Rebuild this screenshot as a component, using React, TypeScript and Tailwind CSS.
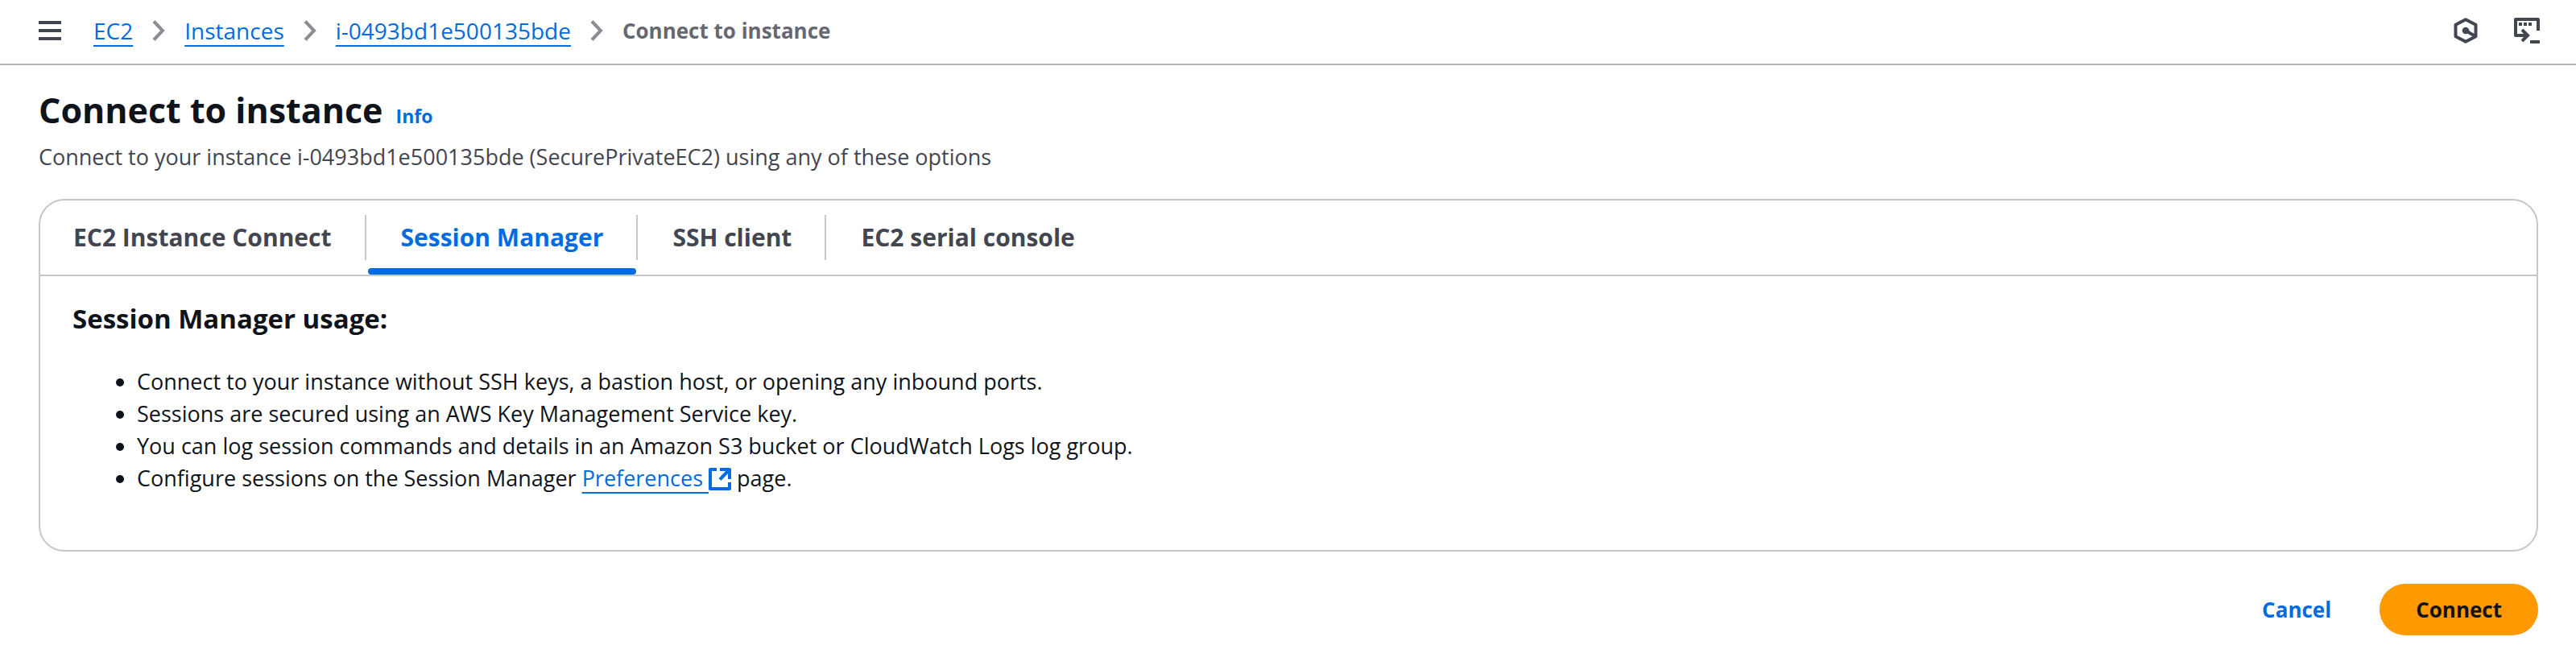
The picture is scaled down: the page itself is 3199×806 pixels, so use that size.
import { Fragment, useState } from "react";

const crumbs = ["EC2", "Instances", "i-0493bd1e500135bde"];
const tabs = ["EC2 Instance Connect", "Session Manager", "SSH client", "EC2 serial console"];
const linkText =
  "text-[#006ce0] underline decoration-2 underline-offset-[7px] [text-decoration-skip-ink:none]";

function MenuIcon() {
  return (
    <svg className="h-6 w-7" viewBox="0 0 28 24" fill="currentColor" aria-hidden="true">
      <path d="M0 0h28v4H0zM0 10h28v4H0zM0 20h28v4H0z" />
    </svg>
  );
}

function ChevronIcon() {
  return (
    <svg className="h-[26px] w-4 text-[#8c8c94]" viewBox="0 0 16 26" fill="none" stroke="currentColor" strokeWidth="4" aria-hidden="true">
      <path d="M2 1.5 13 13 2 24.5" />
    </svg>
  );
}

function HexagonIcon() {
  return (
    <svg className="size-8" viewBox="0 0 32 32" fill="none" stroke="currentColor" strokeWidth="4" strokeLinejoin="round" aria-hidden="true">
      <path d="M16 2.2 28.5 8.8v14.4L16 29.8 3.5 23.2V8.8z" />
      <path d="m16 16 11 6.5" />
      <circle cx="16" cy="16" r="4.3" fill="currentColor" stroke="none" />
    </svg>
  );
}

function TerminalIcon() {
  return (
    <svg className="size-8" viewBox="0 0 32 32" fill="none" stroke="currentColor" strokeWidth="4" aria-hidden="true">
      <path strokeLinejoin="round" d="M30 16V2H2v20h16" />
      <path d="m10 15 7 7-7 7" />
      <path d="M20 30h12" />
      <path fill="currentColor" stroke="none" d="M6 6h4v4H6zM12 6h4v4h-4zM18 6h4v4h-4z" />
    </svg>
  );
}

function ExternalIcon() {
  return (
    <svg className="inline-block size-7 align-[-5px]" viewBox="0 0 28 28" fill="none" stroke="currentColor" strokeWidth="4" strokeLinejoin="round" aria-hidden="true">
      <path d="M10 2H2v24h24v-8" />
      <path d="M14 2h12v12" />
      <path d="M25 3 14 14.5" />
    </svg>
  );
}

export default function App() {
  const [active, setActive] = useState("Session Manager");

  return (
    <div className="bg-white font-['Open_Sans',sans-serif] text-[27px] leading-10 text-[#0f141a]">
      <header className="flex h-[81px] items-center justify-between border-b-2 border-[#b4b4bb] pr-[45px] pb-1 pl-12 text-[#424650]">
        <div className="flex items-center gap-10">
          <button type="button" aria-label="Open navigation">
            <MenuIcon />
          </button>
          <nav aria-label="Breadcrumbs">
            <ol className="flex items-center gap-6 text-[28px]">
              {crumbs.map((crumb) => (
                <Fragment key={crumb}>
                  <li>
                    <a href="#" className={linkText}>{crumb}</a>
                  </li>
                  <li aria-hidden="true">
                    <ChevronIcon />
                  </li>
                </Fragment>
              ))}
              <li className="text-[26px] font-bold text-[#656871]" aria-current="page">
                Connect to instance
              </li>
            </ol>
          </nav>
        </div>
        <div className="flex items-center gap-11">
          <button type="button" aria-label="Amazon Q">
            <HexagonIcon />
          </button>
          <button type="button" aria-label="CloudShell">
            <TerminalIcon />
          </button>
        </div>
      </header>

      <main className="pt-[26px] pr-[47px] pb-4 pl-12">
        <div className="flex items-baseline gap-4">
          <h1 className="text-[43px] leading-[60px] font-bold">Connect to instance</h1>
          <a href="#" className="text-[23px] font-bold text-[#006ce0]">Info</a>
        </div>
        <p className="mt-2 text-[#424650]">
          Connect to your instance i-0493bd1e500135bde (SecurePrivateEC2) using any of these options
        </p>

        <section className="mt-8 rounded-[32px] border-2 border-[#c6c6cd]">
          <div role="tablist" className="flex h-[94px] items-stretch border-b-2 border-[#c6c6cd]">
            {tabs.map((tab, i) => (
              <Fragment key={tab}>
                {i > 0 && <span className="mr-0.5 h-14 w-0.5 self-center bg-[#c6c6cd]" />}
                <button
                  type="button"
                  role="tab"
                  aria-selected={tab === active}
                  onClick={() => setActive(tab)}
                  className={
                    tab === active
                      ? "relative px-[41px] text-[30px] font-bold text-[#006ce0]"
                      : "px-[41px] text-[30px] font-bold text-[#424650]"
                  }
                >
                  {tab}
                  {tab === active && (
                    <span className="absolute inset-x-0 bottom-0 h-2 rounded bg-[#006ce0]" />
                  )}
                </button>
              </Fragment>
            ))}
          </div>
          <div role="tabpanel" className="px-10 pt-[31px] pb-[69px]">
            <h2 className="text-[33px] leading-[44px] font-bold">Session Manager usage:</h2>
            <ul className="mt-9 list-disc pl-20">
              <li>Connect to your instance without SSH keys, a bastion host, or opening any inbound ports.</li>
              <li>Sessions are secured using an AWS Key Management Service key.</li>
              <li>You can log session commands and details in an Amazon S3 bucket or CloudWatch Logs log group.</li>
              <li>
                Configure sessions on the Session Manager{" "}
                <a href="#" className="text-[#006ce0]">
                  <span className={linkText}>Preferences </span>
                  <ExternalIcon />
                </a>{" "}
                page.
              </li>
            </ul>
          </div>
        </section>

        <div className="mt-10 flex justify-end gap-4 text-[26px] font-bold">
          <button type="button" className="h-16 rounded-full px-11 text-[#006ce0]">Cancel</button>
          <button type="button" className="h-16 rounded-full bg-[#ff9900] px-[45px]">Connect</button>
        </div>
      </main>
    </div>
  );
}
